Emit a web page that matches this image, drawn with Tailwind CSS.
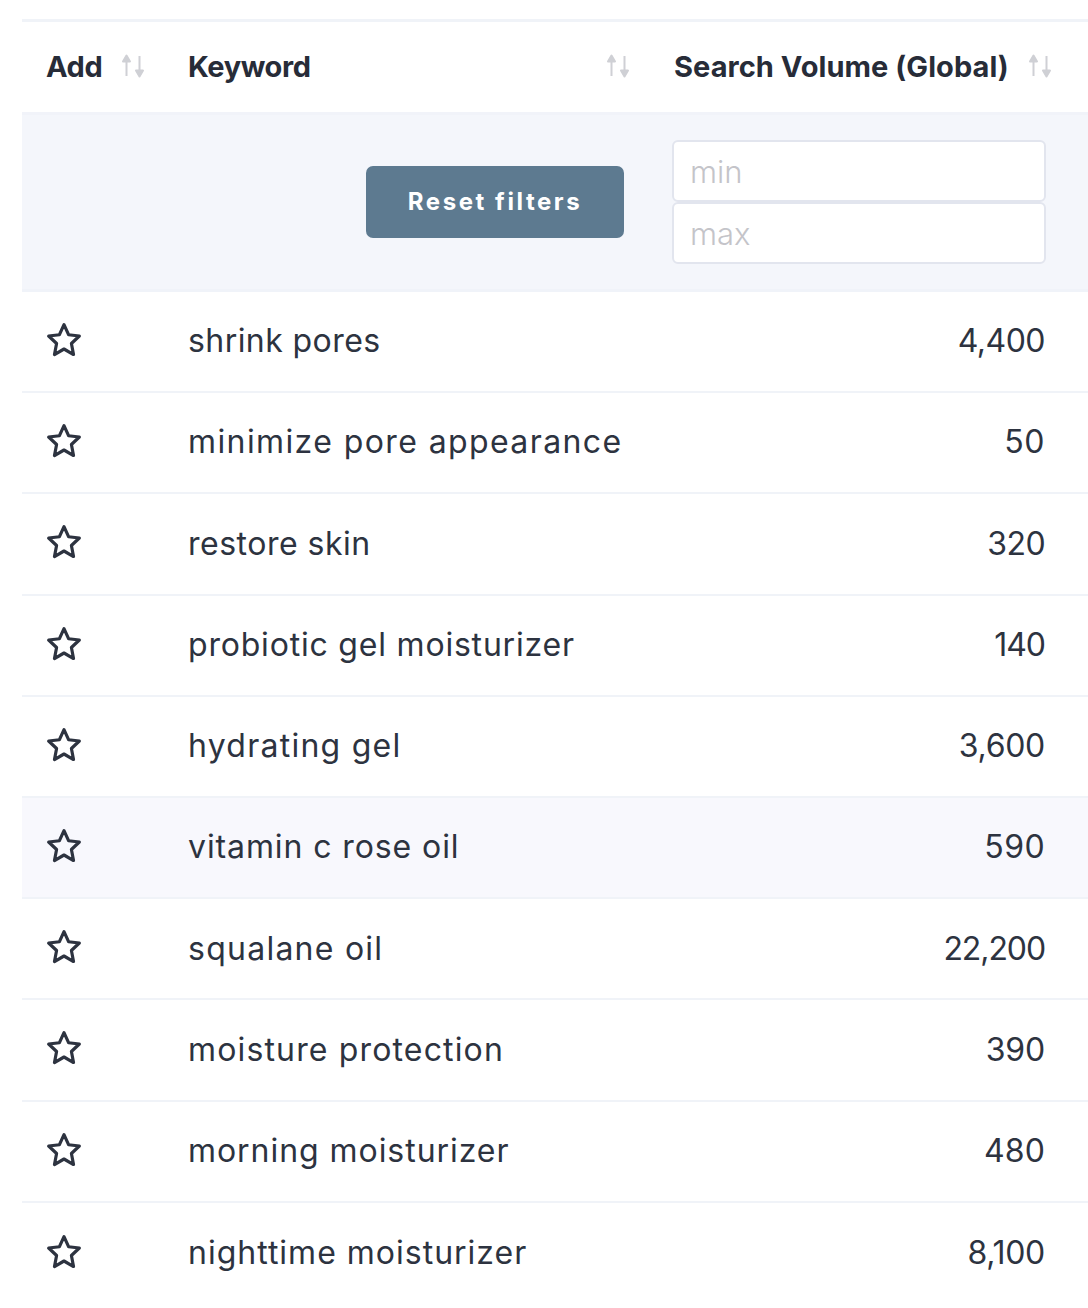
<!doctype html>
<html><head><meta charset="utf-8"><script src="https://cdn.jsdelivr.net/npm/@tailwindcss/browser@4"></script></head>
<body class="bg-white font-['Inter',sans-serif] text-[#2d3340] overflow-hidden">
<svg class="hidden"><defs>
<symbol id="s" viewBox="0 0 26 24"><path d="M6.500 22V2M3 7.500 6.500 1.500 10 7.500ZM19.500 2V22M16 16.500 19.500 22.500 23 16.500Z" fill="#cfd0d5" stroke="#cfd0d5" stroke-width="2" stroke-linejoin="round"/></symbol>
<symbol id="star" viewBox="0 0 34 34"><path d="M17 2.500 21.300 12 31.500 13.200 24 20.300 26 30.700 17 25.500 8 30.700 10 20.300 2.500 13.200 12.700 12Z" fill="none" stroke="#2d3340" stroke-width="3" stroke-linejoin="round"/></symbol>
</defs></svg>
<div class="ml-[22px] mt-[19px] h-[1289px] w-[1066px]">
  <div class="flex h-[96px] items-center border-y-[3px] border-t-[#f0f3f8] border-b-[#f1f3f9] font-bold text-[29px] tracking-[-0.4px] text-[#272c38]">
    <div class="flex w-[142px] items-center pl-[24px]"><span class="w-[74px]">Add</span><svg class="mb-[3px] h-[24px] w-[26px]"><use href="#s"/></svg></div>
    <div class="flex w-[487px] items-center pl-[24px] pr-[20px]"><span class="flex-1">Keyword</span><svg class="mb-[3px] h-[24px] w-[26px]"><use href="#s"/></svg></div>
    <div class="flex flex-1 items-center pl-[23px]"><span class="w-[353px] whitespace-nowrap tracking-[0.05px]">Search Volume (Global)</span><svg class="mb-[3px] h-[24px] w-[26px]"><use href="#s"/></svg></div>
  </div>
  <div class="flex h-[177px] items-center border-b-[3px] border-[#f0f3f9] bg-[#f4f6fb]">
    <div class="flex w-[602px] justify-end"><button class="h-[72px] w-[258px] rounded-[7px] bg-[#5d7a90] text-[24px] font-bold tracking-[2.550px] text-white">Reset filters</button></div>
    <div class="ml-[48px] flex w-[374px] flex-col gap-0">
      <input placeholder="min" class="h-[62px] w-full rounded-[6px] border-2 border-[#e2e5ee] bg-white px-[16px] text-[31px] font-light placeholder:text-[#c4c4c9]">
      <input placeholder="max" class="h-[62px] w-full rounded-[6px] border-2 border-[#e2e5ee] bg-white px-[16px] text-[31px] font-light placeholder:text-[#c4c4c9]">
    </div>
  </div>
  <div class="text-[32px]">
    <div class="flex h-[101.200px] items-center border-b-2 border-[#f0f3f8]"><svg class="mb-[3px] ml-[24px] mr-[106px] h-[36px] w-[36px] shrink-0"><use href="#star"/></svg><span class="mb-[1px] flex-1 tracking-[0.43px]">shrink pores</span><span class="mb-[1px] pr-[43px] tracking-[-0.5px]">4,400</span></div>
    <div class="flex h-[101.200px] items-center border-b-2 border-[#f0f3f8]"><svg class="mb-[3px] ml-[24px] mr-[106px] h-[36px] w-[36px] shrink-0"><use href="#star"/></svg><span class="mb-[1px] flex-1 tracking-[1.4px]">minimize pore appearance</span><span class="mb-[1px] pr-[43px] tracking-[0.5px]">50</span></div>
    <div class="flex h-[101.200px] items-center border-b-2 border-[#f0f3f8]"><svg class="mb-[3px] ml-[24px] mr-[106px] h-[36px] w-[36px] shrink-0"><use href="#star"/></svg><span class="flex-1 tracking-[0.5px]">restore skin</span><span class="pr-[43px] tracking-[-0.6px]">320</span></div>
    <div class="flex h-[101.200px] items-center border-b-2 border-[#f0f3f8]"><svg class="mb-[3px] ml-[24px] mr-[106px] h-[36px] w-[36px] shrink-0"><use href="#star"/></svg><span class="mb-[1px] flex-1 tracking-[0.8px]">probiotic gel moisturizer</span><span class="mb-[1px] pr-[43px] tracking-[-1px]">140</span></div>
    <div class="flex h-[101.200px] items-center border-b-2 border-[#f0f3f8]"><svg class="mb-[3px] ml-[24px] mr-[106px] h-[36px] w-[36px] shrink-0"><use href="#star"/></svg><span class="mb-[1px] flex-1 tracking-[1.25px]">hydrating gel</span><span class="mb-[1px] pr-[43px] tracking-[-0.3px]">3,600</span></div>
    <div class="flex h-[101.200px] items-center border-b-2 border-[#f0f3f8] bg-[#f8f8fd]"><svg class="mb-[3px] ml-[24px] mr-[106px] h-[36px] w-[36px] shrink-0"><use href="#star"/></svg><span class="mb-[1px] flex-1 tracking-[0.9px]">vitamin c rose oil</span><span class="mb-[1px] pr-[43px] tracking-[0.4px]">590</span></div>
    <div class="flex h-[101.200px] items-center border-b-2 border-[#f0f3f8]"><svg class="mb-[3px] ml-[24px] mr-[106px] h-[36px] w-[36px] shrink-0"><use href="#star"/></svg><span class="flex-1 tracking-[1.25px]">squalane oil</span><span class="pr-[43px] tracking-[-1.1px]">22,200</span></div>
    <div class="flex h-[101.200px] items-center border-b-2 border-[#f0f3f8]"><svg class="mb-[3px] ml-[24px] mr-[106px] h-[36px] w-[36px] shrink-0"><use href="#star"/></svg><span class="flex-1 tracking-[1.15px]">moisture protection</span><span class="pr-[43px] tracking-[-0.2px]">390</span></div>
    <div class="flex h-[101.200px] items-center border-b-2 border-[#f0f3f8]"><svg class="mb-[3px] ml-[24px] mr-[106px] h-[36px] w-[36px] shrink-0"><use href="#star"/></svg><span class="mb-[1px] flex-1 tracking-[0.95px]">morning moisturizer</span><span class="mb-[1px] pr-[43px] tracking-[0.1px]">480</span></div>
    <div class="flex h-[101.200px] items-center"><svg class="mb-[3px] ml-[24px] mr-[106px] h-[36px] w-[36px] shrink-0"><use href="#star"/></svg><span class="mb-[1px] flex-1 tracking-[1px]">nighttime moisturizer</span><span class="mb-[1px] pr-[43px] tracking-[-0.3px]">8,100</span></div>
  </div>
</div>
</body></html>
